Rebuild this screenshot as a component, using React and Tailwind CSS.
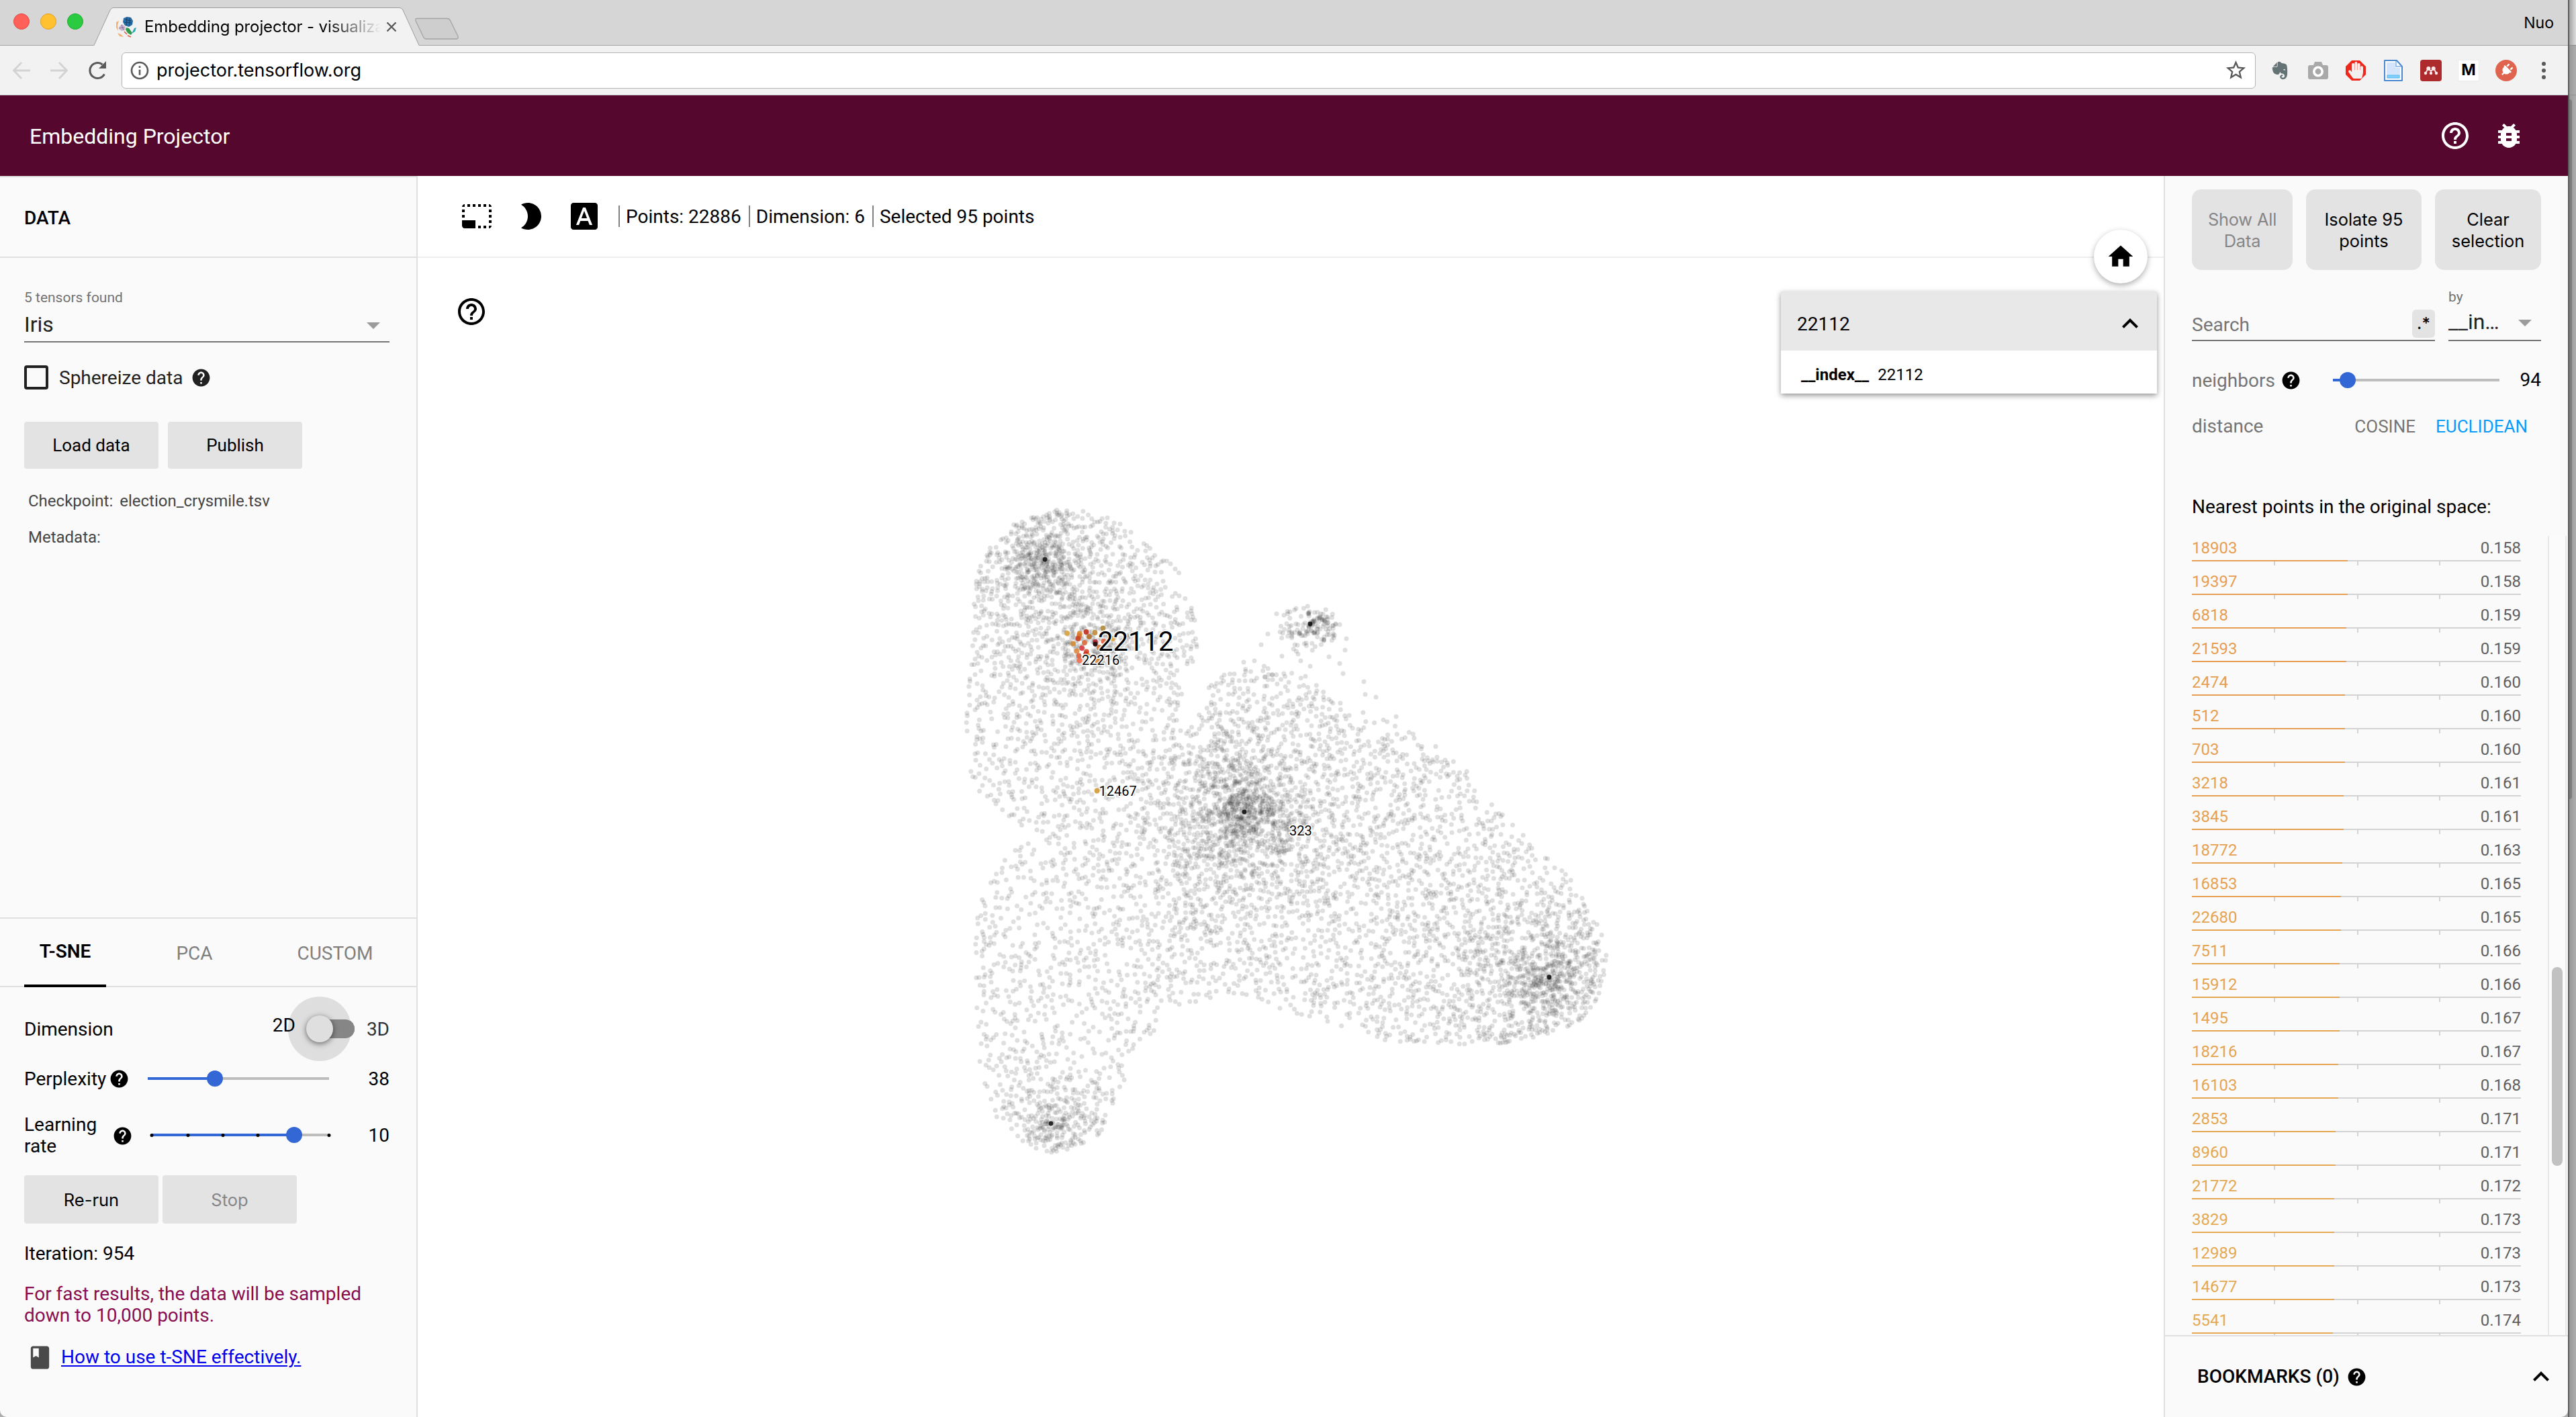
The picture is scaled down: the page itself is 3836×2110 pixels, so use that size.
import React from "react";
import {
  MdHelp, MdHelpOutline, MdBugReport, MdPhotoSizeSelectSmall, MdBrightness2, MdFontDownload,
  MdHome, MdKeyboardArrowUp, MdBook, MdStarBorder, MdInfoOutline,
} from "react-icons/md";
import { FaEvernote, FaHandPaper, FaPlug } from "react-icons/fa";

/* ---------- scatter plot data ---------- */

const OUTLINE = [
  [1570, 758], [1625, 762], [1668, 778], [1700, 800], [1730, 825], [1758, 850], [1773, 890], [1781, 930], [1783, 975],
  [1781, 1000], [1766, 1035], [1752, 1056], [1775, 1054], [1800, 1024], [1815, 1008], [1845, 992], [1880, 988], [1930, 1000],
  [1990, 1036], [2040, 1066], [2100, 1083], [2150, 1112], [2190, 1152], [2220, 1195], [2257, 1233], [2300, 1272],
  [2328, 1295], [2352, 1325], [2370, 1360], [2387, 1392], [2396, 1430], [2393, 1465], [2375, 1497], [2355, 1520],
  [2325, 1536], [2290, 1546], [2230, 1555], [2150, 1557], [2110, 1556], [2060, 1548], [2015, 1536], [1985, 1524],
  [1950, 1514], [1915, 1506], [1885, 1494], [1855, 1482], [1820, 1480], [1790, 1492], [1755, 1500], [1730, 1508],
  [1722, 1530], [1712, 1545], [1692, 1565], [1683, 1592], [1668, 1620], [1657, 1650], [1648, 1672], [1635, 1692],
  [1612, 1706], [1580, 1716], [1555, 1716], [1530, 1706], [1510, 1690], [1490, 1672], [1476, 1650], [1466, 1620],
  [1460, 1590], [1456, 1555], [1453, 1510], [1450, 1450], [1452, 1400], [1456, 1360], [1466, 1325], [1482, 1300],
  [1498, 1275], [1524, 1258], [1520, 1236], [1498, 1214], [1480, 1196], [1458, 1178], [1446, 1155], [1440, 1120],
  [1438, 1060], [1441, 1000], [1443, 940], [1447, 890], [1457, 850], [1472, 818], [1496, 788], [1530, 768],
];

// [x, y, strength, radius]
const CLUSTERS = [
  [1556, 833, 0.075, 36], [1631, 960, 0.034, 38], [1853, 1209, 0.085, 46], [2307, 1455, 0.065, 42],
  [1565, 1673, 0.06, 28], [2230, 1420, 0.007, 150], [1600, 930, 0.0035, 130], [1840, 1240, 0.005, 150],
];

const STRAYS = [
  [1888, 944], [1895, 1005], [1933, 974], [1909, 977], [1868, 984], [1852, 986], [1937, 984], [1951, 992], [1979, 978],
  [1995, 988], [2000, 1003], [1944, 1007], [1878, 960], [1895, 1012], [2033, 1034], [2049, 1038], [1823, 1005],
  [2031, 1015], [2079, 1067], [2005, 951], [2003, 968], [1995, 930], [1989, 930], [1822, 1014], [1884, 1008],
  [1901, 914], [1912, 916], [1921, 911], [1930, 906], [1977, 922], [1967, 914], [1950, 911],
];

const SELECTED = [
  [1589, 943, "#d9a440"], [1607.5, 943.5, "#dd8a35"], [1617.5, 941, "#c02c1a"], [1630.5, 942, "#c08c34"],
  [1642.5, 935.5, "#b08a34"], [1607, 947, "#d9762f"], [1605.5, 951, "#cb4422"], [1622, 948, "#b3712c"],
  [1598, 958.5, "#d28b38"], [1615, 957, "#dd6c3c"], [1611, 965, "#dc3c40"], [1631, 956, "#b02430"],
  [1643.5, 955, "#de5f34"], [1603.5, 969.5, "#df8b3e"], [1618, 970.5, "#d84c2c"], [1617, 974, "#c83424"],
  [1606.5, 976.5, "#d8603c"], [1607.5, 983.5, "#ee6c4e"], [1637, 964, "#d87a38"], [1657, 951, "#dfa444"],
  [1621, 977, "#e09a40"], [1634, 984, "#e08a3c"], [1633.5, 1177.5, "#d39a35"],
];

function inside(x, y) {
  let hit = false;
  for (let i = 0, j = OUTLINE.length - 1; i < OUTLINE.length; j = i++) {
    const [xi, yi] = OUTLINE[i];
    const [xj, yj] = OUTLINE[j];
    if (yi > y !== yj > y && x < ((xj - xi) * (y - yi)) / (yj - yi) + xi) hit = !hit;
  }
  return hit;
}

function buildPoints() {
  let seed = 22112;
  const rnd = () => {
    seed = (seed + 0x6d2b79f5) | 0;
    let t = Math.imul(seed ^ (seed >>> 15), 1 | seed);
    t = (t + Math.imul(t ^ (t >>> 7), 61 | t)) ^ t;
    return ((t ^ (t >>> 14)) >>> 0) / 4294967296;
  };
  const pts = [];
  const cells = new Map();
  const size = 12;
  const dMax = 0.1;
  const darts = Math.round(970 * 970 * dMax * 1.12);
  for (let i = 0; i < darts; i++) {
    const x = 1432 + rnd() * 970;
    const y = 752 + rnd() * 970;
    const pick = rnd();
    let d = 0.0078;
    for (const [cx, cy, a, s] of CLUSTERS) d += a * Math.exp(-Math.hypot(x - cx, y - cy) / s);
    if (x > 1690 && x < 1800 && y > 990 && y < 1120) d *= 0.6;
    if (y > 1240 && x < 1720 && y < 1600) d *= 0.85;
    if (pick * dMax > d || !inside(x, y)) continue;
    const r = 0.33 / Math.sqrt(d);
    const gx = Math.floor(x / size);
    const gy = Math.floor(y / size);
    let clash = false;
    for (let a = -1; a <= 1 && !clash; a++)
      for (let b = -1; b <= 1 && !clash; b++)
        for (const q of cells.get((gx + a) * 1000 + gy + b) || [])
          if (Math.hypot(q[0] - x, q[1] - y) < r) { clash = true; break; }
    if (clash) continue;
    const k = gx * 1000 + gy;
    if (!cells.has(k)) cells.set(k, []);
    cells.get(k).push([x, y]);
    pts.push([x, y]);
  }
  for (let i = 0; i < 130; i++) {
    const a = rnd() * Math.PI * 2;
    const r = Math.pow(rnd(), 0.9) * 44;
    pts.push([1949 + Math.cos(a) * r, 932 + Math.sin(a) * r * 0.85 + (r > 25 ? 4 : 0)]);
  }
  return pts.concat(STRAYS);
}

const POINTS = buildPoints();
const CORES = [[1556, 833], [1631, 959], [1853, 1209], [1951, 929], [2307, 1455], [1565, 1673]];

function Scatter() {
  return (
    <svg className="absolute inset-0 h-full w-full" viewBox="622 384 2600 1726" preserveAspectRatio="xMinYMin slice">
      <g fill="#000" fillOpacity="0.125">
        {POINTS.map(([x, y], i) => <circle key={i} cx={x.toFixed(1)} cy={y.toFixed(1)} r="3.5" />)}
      </g>
      <g fill="#000" fillOpacity="0.8">
        {CORES.map(([x, y]) => <circle key={x} cx={x} cy={y} r="3.4" />)}
      </g>
      <g fillOpacity="0.9">
        {SELECTED.map(([x, y, c], i) => <circle key={i} cx={x} cy={y} r="3.9" fill={c} />)}
      </g>
      <circle cx="1631" cy="959" r="3.4" fill="#2a1014" />
      <g fontFamily="Roboto, sans-serif" fill="#000" stroke="#fff" strokeWidth="3" strokeLinejoin="round" paintOrder="stroke">
        <text x="1635" y="969" fontSize="40">22112</text>
        <text x="1611" y="990" fontSize="20">22216</text>
        <text x="1636.5" y="1185" fontSize="20">12467</text>
        <text x="1920" y="1244" fontSize="20">323</text>
      </g>
    </svg>
  );
}

/* ---------- browser chrome ---------- */

function Favicon() {
  return (
    <svg className="h-[32px] w-[32px]" viewBox="0 0 32 32">
      <path d="M12 3l5-2 6 1 3 5-1 6-5 3-6-2-3-5z" fill="#2a6ea6" />
      <path d="M14 5l9 2M13 9l11 1M17 2l-1 12M21 2v12" stroke="#15436e" strokeWidth="1" />
      <path d="M6 15l4-3 5 4-1 5-5 1-4-3z" fill="#c9b6cf" />
      <path d="M9 13l3 8M5 18l8-1" stroke="#8d6f99" strokeWidth="1" />
      <path d="M16 17l4 1 5 7-2 3-5-3-3-5z" fill="#2e9a4a" />
      <path d="M31 17l-2 6-5 3 4-8z" fill="#2aa7b5" />
      <path d="M1 9l4-2-2 7 1 8-3-5zM3 25l5 2 4 4-6-1z" fill="#f2b277" />
      <path d="M13 23l4 4M18 29l5 2" stroke="#d8604a" strokeWidth="1.6" />
    </svg>
  );
}

function TabStrip() {
  return (
    <div className="flex h-[68px] shrink-0 border-b border-[#a2a2a2] bg-[#d6d6d6]">
      <div className="flex w-[140px] items-center gap-4 pl-5 pb-1">
        <span className="h-6 w-6 rounded-full border border-[#e2463f] bg-[#ff6058]" />
        <span className="h-6 w-6 rounded-full border border-[#dfa023] bg-[#ffc130]" />
        <span className="h-6 w-6 rounded-full border border-[#1dac2c] bg-[#2aca41]" />
      </div>
      <div className="relative h-[68px] w-[484px]">
        <svg className="absolute inset-0" width="484" height="68" viewBox="0 0 484 68">
          <path d="M0 67.5L24 15q2-3.500 5-3.500H455q3 0 5 3.500L484 67.500" fill="#f2f2f2" stroke="#9c9c9c" />
          <path d="M0.500 67.500H483.500" stroke="#f2f2f2" strokeWidth="1" />
        </svg>
        <div className="relative flex h-full items-center pl-[32px] pt-[12px]">
          <Favicon />
          <div className="ml-[11px] w-[351px] overflow-hidden whitespace-nowrap font-[Inter] text-[24px] leading-[32px] tracking-[-0.1px] text-black [mask-image:linear-gradient(to_right,#000_270px,transparent_352px)]">
            Embedding projector - visualiza
          </div>
          <svg className="ml-[9px] h-[16px] w-[16px]" viewBox="0 0 16 16">
            <path d="M1.500 1.500l13 13M14.500 1.500l-13 13" stroke="#5a5a5a" strokeWidth="2.400" />
          </svg>
        </div>
      </div>
      <svg className="-ml-[8px] mt-[26px]" width="70" height="34" viewBox="0 0 70 34">
        <path d="M5 1.500H50q3 0 4.500 3L66 28q1 4-3 4H19q-3 0-4.500-3L3 5q-1-3.500 2-3.500z" fill="#cecece" stroke="#a4a4a4" strokeWidth="1.300" />
      </svg>
      <div className="ml-auto pr-[21px] pt-[17px] font-[Inter] text-[23px] leading-[34px] text-black">Nuo</div>
    </div>
  );
}

function Extensions() {
  return (
    <>
      <span className="flex w-[26px]"><FaEvernote className="h-[30px] w-[26px] text-[#647376]" /></span>
      <svg className="ml-[29px]" width="30" height="26" viewBox="0 0 30 26">
        <path d="M0 8q0-3 3-3h5l2-5h10l2 5h5q3 0 3 3v15q0 3-3 3H3q-3 0-3-3z" fill="#a9a9a9" />
        <circle cx="15" cy="14.500" r="6.200" fill="none" stroke="#fff" strokeWidth="3.600" />
      </svg>
      <span className="relative ml-[26px] flex h-[30px] w-[30px] items-center justify-center">
        <svg className="absolute inset-0" width="30" height="30" viewBox="0 0 30 30">
          <path d="M9 0h12l9 9v12l-9 9H9l-9-9V9z" fill="#f0281b" />
        </svg>
        <FaHandPaper className="relative h-[25px] w-[22px] text-[#f4efef]" />
      </span>
      <svg className="ml-[27px]" width="28" height="32" viewBox="0 0 28 32">
        <path d="M1 1h18l8 9v21H1z" fill="#fff" stroke="#4a88d0" strokeWidth="2" strokeLinejoin="round" />
        <path d="M4 4h13v8h7v16H4z" fill="#d4e5fb" />
        <path d="M18 2v8h8" fill="none" stroke="#7fb0e8" strokeWidth="1.500" />
        <path d="M5 23h18v4H5z" fill="#7fd0fb" stroke="#5cbcf3" />
      </svg>
      <svg className="ml-[26px]" width="32" height="32" viewBox="0 0 32 32">
        <rect width="32" height="32" rx="4" fill="#ad2b2d" />
        <g fill="#fbeaea">
          <circle cx="12.300" cy="13" r="3" /><circle cx="19.700" cy="13" r="3" />
          <circle cx="8" cy="20" r="2.200" /><circle cx="16" cy="20" r="2.200" /><circle cx="24" cy="20" r="2.200" />
        </g>
        <path d="M8 20l3.800-7 4.200 4 4.200-4 3.800 7" fill="none" stroke="#fbeaea" strokeWidth="1.800" />
      </svg>
      <span className="ml-[24px] flex h-[32px] w-[32px] items-center justify-center border border-[#ececec] bg-white font-[Inter] text-[23px] font-bold leading-none text-black">M</span>
      <span className="ml-[24px] flex h-[32px] w-[32px] items-center justify-center rounded-full bg-[#e0634f]">
        <FaPlug className="h-[19px] w-[19px] rotate-45 text-white" />
      </span>
      <span className="ml-[37px] flex flex-col gap-[4px]">
        <i className="h-[6px] w-[6px] rounded-full bg-[#5a5a5a]" />
        <i className="h-[6px] w-[6px] rounded-full bg-[#5a5a5a]" />
        <i className="h-[6px] w-[6px] rounded-full bg-[#5a5a5a]" />
      </span>
    </>
  );
}

function Toolbar() {
  return (
    <div className="flex h-[74px] shrink-0 items-center border-b border-[#c4c4c4] bg-[#f2f2f2] pl-[13px] text-[#5a5a5a]">
      <svg width="38" height="30" viewBox="0 0 38 30" fill="none" stroke="#d3d3d3" strokeWidth="2.800">
        <path d="M32 15H8M19 3L7.500 15L19 27" />
      </svg>
      <svg className="ml-[18px]" width="38" height="30" viewBox="0 0 38 30" fill="none" stroke="#d3d3d3" strokeWidth="2.800">
        <path d="M6 15h24M19 3l11.500 12L19 27" />
      </svg>
      <svg className="ml-[20px]" width="36" height="32" viewBox="0 0 36 32">
        <path d="M28.500 21.500A11.500 11.500 0 1 1 25.500 7" fill="none" stroke="#5a5a5a" strokeWidth="3" />
        <path d="M31 2v11H20z" fill="#5a5a5a" />
      </svg>
      <div className="ml-[18px] flex h-[54px] w-[3178px] items-center rounded-[6px] border border-[#b4b4b4] bg-white pl-[10px] pr-[11px]">
        <MdInfoOutline className="h-[32px] w-[32px]" />
        <span className="ml-[9px] pt-px font-[Inter] text-[27px] leading-[34px] text-black">projector.tensorflow.org</span>
        <MdStarBorder className="ml-auto h-[35px] w-[35px]" />
      </div>
      <div className="ml-[23px] flex items-center">
        <Extensions />
      </div>
    </div>
  );
}

/* ---------- shared pieces ---------- */

function Slider({ className, fill, knob, ticks }) {
  return (
    <div className={"relative flex h-6 items-center " + className}>
      <div className="h-1 w-full bg-[#bdbdbd]">
        <div className="h-1 bg-[#3367d6]" style={{ width: fill }} />
      </div>
      {ticks && ticks.map((t) => <i key={t} className="absolute h-[5px] w-[5px] -translate-x-1/2 rounded-full bg-black" style={{ left: t }} />)}
      <i className="absolute h-6 w-6 -translate-x-1/2 rounded-full bg-[#3367d6]" style={{ left: knob }} />
    </div>
  );
}

const Caret = () => <i className="mt-1 block border-x-[10px] border-t-[10px] border-x-transparent border-t-[#9b9b9b]" />;

/* ---------- left panel ---------- */

function DataPanel() {
  return (
    <>
      <div className="flex h-[122px] items-center border-y-2 border-[#e0e0e0] pl-9 pt-[3px] font-medium">DATA</div>
      <div className="px-9">
        <div className="mt-[47px] h-6 text-[21px] leading-6 text-[#737373]">5 tensors found</div>
        <div className="mt-[3px] flex h-[52px] w-[544px] items-center justify-between border-b-2 border-[#757575] pr-[14px] text-[32px] text-[#212121]">
          Iris
          <Caret />
        </div>
        <div className="mt-[34px] flex h-9 items-center text-[#212121]">
          <span className="h-9 w-9 rounded-[4px] border-4 border-[#212121]" />
          <span className="ml-4 pt-px">Sphereize data</span>
          <MdHelp className="ml-[12px] h-[31px] w-[31px]" />
        </div>
        <div className="mt-12 flex gap-[14px] text-[26px]">
          <div className="flex h-[70px] w-[200px] items-center justify-center rounded-[4px] bg-[#e3e3e3]">Load data</div>
          <div className="flex h-[70px] w-[200px] items-center justify-center rounded-[4px] bg-[#e3e3e3]">Publish</div>
        </div>
        <div className="mt-[33px] flex h-[30px] items-center gap-[10px] pl-[6px] text-[24px] text-[#454545]">
          <span>Checkpoint:</span>
          <span>election_crysmile.tsv</span>
        </div>
        <div className="mt-[24px] flex h-[30px] items-center pl-[6px] text-[24px] text-[#454545]">Metadata:</div>
      </div>
    </>
  );
}

function TsnePanel() {
  return (
    <>
      <div className="flex h-[104px] shrink-0 border-y-2 border-[#e0e0e0] pl-9">
        <div className="-mb-[2px] flex w-[122px] items-center justify-center border-b-4 border-black font-[600]">T-SNE</div>
        <div className="flex w-[263px] items-center justify-center pt-[3px] text-[#808080]">PCA</div>
        <div className="flex w-[156px] items-center justify-center pt-[3px] text-[#808080]">CUSTOM</div>
      </div>
      <div className="h-[640px] shrink-0 pl-9 pr-10">
        <div className="mt-10 flex h-11 items-center">
          <span className="pt-[2px]">Dimension</span>
          <span className="relative z-10 ml-auto -translate-y-[5px]">2D</span>
          <span className="relative ml-4 flex h-7 w-[72px] rounded-full bg-[#868686]">
            <i className="absolute -left-[27px] -top-[34px] h-[96px] w-[94px] rounded-full bg-[#dedede]" />
            <i className="absolute left-5 right-0 h-7 rounded-r-full bg-[#868686]" />
            <i className="absolute -top-[6px] h-10 w-10 rounded-full bg-[#dfdfdf] shadow-[0_2px_8px_rgba(0,0,0,0.55)]" />
          </span>
          <span className="ml-[18px] pt-[2px] text-[#333]">3D</span>
        </div>
        <div className="mt-8 flex h-10 items-center">
          <span className="pt-px">Perplexity</span>
          <MdHelp className="ml-[4px] h-[31px] w-[31px]" />
          <Slider className="ml-[27px] w-[270px]" fill={100} knob={100} />
          <span className="ml-auto pt-px">38</span>
        </div>
        <div className="mt-[33px] flex h-16 items-center leading-8">
          <span className="w-[131px]">Learning rate</span>
          <MdHelp className="h-[31px] w-[31px]" />
          <Slider className="ml-[28px] w-[264px] -translate-y-px" fill={212} knob={212} ticks={[0, 54, 106, 158, 264]} />
          <span className="ml-auto">10</span>
        </div>
        <div className="mt-[27px] flex gap-[6px] font-[Inter] text-[25.5px]">
          <div className="flex h-[72px] w-[200px] items-center justify-center rounded-[4px] bg-[#e3e3e3] pt-px">Re-run</div>
          <div className="flex h-[72px] w-[200px] items-center justify-center rounded-[4px] bg-[#e3e3e3] pt-px text-[#868686]">Stop</div>
        </div>
        <div className="mt-[29px] leading-8">Iteration: 954</div>
        <div className="mt-[28px] leading-8 text-[#880e4f]">
          For fast results, the data will be sampled<br />down to 10,000 points.
        </div>
        <div className="mt-[25px] flex h-10 items-center pl-[3px]">
          <MdBook className="mt-[3px] h-[41px] w-[41px] text-[#4a4a4a]" />
          <span className="ml-[11px] pt-px text-[#0000ee] underline decoration-2 underline-offset-[3px]">How to use t-SNE effectively.</span>
        </div>
      </div>
    </>
  );
}

/* ---------- right panel ---------- */

const NEIGHBORS = [
  [18903, "0.158", 232, "#e79d52"], [19397, "0.158", 232, "#e79d52"], [6818, "0.159", 230, "#e79d52"], [21593, "0.159", 230, "#e79d52"],
  [2474, "0.160", 228, "#e69e52"], [512, "0.160", 228, "#e69f52"], [703, "0.160", 228, "#e69f52"], [3218, "0.161", 226, "#e6a052"],
  [3845, "0.161", 226, "#e6a052"], [18772, "0.163", 224, "#e6a152"], [16853, "0.165", 222, "#e6a252"], [22680, "0.165", 222, "#e6a352"],
  [7511, "0.166", 220, "#e5a352"], [15912, "0.166", 220, "#e5a452"], [1495, "0.167", 220, "#e5a452"], [18216, "0.167", 218, "#e5a452"],
  [16103, "0.168", 218, "#e5a552"], [2853, "0.171", 214, "#e5a752"], [8960, "0.171", 214, "#e5a752"], [21772, "0.172", 212, "#e4a852"],
  [3829, "0.173", 212, "#e4a952"], [12989, "0.173", 212, "#e4a952"], [14677, "0.173", 212, "#e4a952"], [5541, "0.174", 210, "#e4a952"],
];

function NeighborRow({ id, value, width, color }) {
  return (
    <div className="h-[50px] w-[490px] shrink-0">
      <div className="flex h-9 items-center justify-between text-[24px]">
        <span className="font-[450]" style={{ color }}>{id}</span>
        <span className="text-[#606060]">{value}</span>
      </div>
      <div className="h-[2px] bg-[#d3d3d3]">
        <div className="h-[2px]" style={{ width, background: color }} />
      </div>
      <div className="flex h-[6px] gap-[122px] pl-[122px]">
        <i className="w-[2px] bg-[#d3d3d3]" />
        <i className="w-[2px] bg-[#d3d3d3]" />
        <i className="-ml-[2px] w-[2px] bg-[#d3d3d3]" />
      </div>
    </div>
  );
}

function Inspector() {
  return (
    <div className="flex w-[602px] shrink-0 flex-col border-l-2 border-[#e0e0e0] bg-[#fafafa]">
      <div className="pl-10 pr-10">
        <div className="mt-5 flex h-[120px] gap-5 text-center font-[Inter] text-[25.4px] leading-8">
          <div className="flex w-[150px] items-center justify-center rounded-[14px] bg-[#e3e3e3] pt-[2px] tracking-[-0.2px] text-[#868686]">Show All<br />Data</div>
          <div className="flex w-[172px] items-center justify-center rounded-[14px] bg-[#e3e3e3] pt-[2px]">Isolate 95<br />points</div>
          <div className="flex w-[158px] items-center justify-center rounded-[14px] bg-[#e3e3e3] pt-[2px]">Clear<br />selection</div>
        </div>
        <div className="mt-[30px] flex h-[76px] items-end gap-5">
          <div className="flex h-[50px] w-[362px] items-center justify-between border-b-2 border-[#757575] text-[#757575]">
            <span className="pt-[3px]">Search</span>
            <span className="mb-[2px] mt-[2px] flex h-[42px] w-[34px] items-center justify-center rounded-[6px] bg-[#e3e3e3] font-[Inter] text-[24px] font-medium text-black">.*</span>
          </div>
          <div className="h-[76px] w-[138px] border-b-2 border-[#757575]">
            <div className="h-[20px] text-[21px] leading-[20px] text-[#737373]">by</div>
            <div className="flex h-[54px] items-center justify-between pb-[2px] pr-[14px] pt-[2px] text-[32px] text-[#212121]">
              __in… <Caret />
            </div>
          </div>
        </div>
        <div className="mt-[38px] flex h-10 items-center">
          <span className="pt-px text-[#757575]">neighbors</span>
          <MdHelp className="ml-[8px] h-[31px] w-[31px]" />
          <Slider className="ml-[47px] w-[248px]" fill={22} knob={22} />
          <span className="ml-auto">94</span>
        </div>
        <div className="mt-7 flex h-10 items-center pt-[2px] text-[#757575]">
          distance
          <span className="ml-auto text-[26px]">COSINE</span>
          <span className="ml-[30px] mr-[20px] text-[26px] text-[#0a9bfb]">EUCLIDEAN</span>
        </div>
        <div className="mt-[83px] h-9 whitespace-nowrap leading-9">Nearest points in the original space:</div>
      </div>
      <div className="mt-[25px] flex h-[1190px] shrink-0">
        <div className="flex h-[1190px] w-[570px] flex-col overflow-hidden pl-10">
          {NEIGHBORS.map(([id, value, width, color]) => <NeighborRow key={id} id={id} value={value} width={width} color={color} />)}
        </div>
        <div className="flex w-[28px] justify-center border-x-2 border-[#e8e8e8] bg-[#fbfbfb]">
          <i className="mt-[642px] h-[296px] w-4 rounded-full bg-[#c1c1c1]" />
        </div>
      </div>
      <div className="flex flex-1 items-center border-t-2 border-[#e0e0e0] pl-[48px] pr-[16px] font-medium">
        BOOKMARKS (0)
        <MdHelp className="ml-[10px] h-[31px] w-[31px]" />
        <MdKeyboardArrowUp className="ml-auto h-12 w-12" />
      </div>
    </div>
  );
}

/* ---------- middle ---------- */

function Projector() {
  return (
    <div className="flex flex-1 flex-col bg-white">
      <div className="flex h-[122px] shrink-0 items-center border-b-2 border-[#eee] pl-16">
        <MdPhotoSizeSelectSmall className="h-12 w-12" />
        <MdBrightness2 className="ml-8 h-12 w-12" />
        <MdFontDownload className="ml-8 h-12 w-12" />
        <span className="ml-[27px] h-8 border-l-2 border-[#808080] pl-[9px] leading-[34px]">Points: 22886</span>
        <span className="ml-[11px] h-8 border-l-2 border-[#808080] pl-[9px] leading-[34px]">Dimension: 6</span>
        <span className="ml-[11px] h-8 border-l-2 border-[#808080] pl-[9px] leading-[34px]">Selected 95 points</span>
      </div>
      <div className="relative flex-1">
        <Scatter />
        <MdHelpOutline className="absolute left-[56px] top-[56px] h-12 w-12" />
        <div className="absolute right-[24px] -top-[42px] flex h-20 w-20 items-center justify-center rounded-full bg-white shadow-[0_3px_8px_rgba(0,0,0,0.32)]">
          <MdHome className="h-11 w-11" />
        </div>
        <div className="absolute right-[10px] top-[50px] w-[560px] bg-white shadow-[0_3px_8px_rgba(0,0,0,0.42)]">
          <div className="flex h-[88px] items-center justify-between bg-[#e8e8e8] pl-6 pr-4 pt-[7px]">
            <span className="pt-[2px]">22112</span>
            <MdKeyboardArrowUp className="h-12 w-12" />
          </div>
          <div className="flex h-16 items-center gap-[13px] pl-[30px] pt-[7px] text-[24px]">
            <b>__index__</b>
            <span>22112</span>
          </div>
        </div>
      </div>
    </div>
  );
}

export default function App() {
  return (
    <div className="flex h-[2110px] w-[3836px] overflow-hidden bg-[#ababab] font-[Roboto,sans-serif] text-[28px] leading-9 text-black">
      <div className="flex w-[3824px] shrink-0 flex-col overflow-hidden rounded-b-[10px]">
        <TabStrip />
        <Toolbar />
        <div className="flex h-[120px] shrink-0 items-center bg-[#55072e] pl-11 pr-[64px] text-white">
          <span className="pt-[2px] text-[32px]">Embedding Projector</span>
          <MdHelpOutline className="ml-auto h-12 w-12" />
          <MdBugReport className="ml-8 h-12 w-12" />
        </div>
        <div className="flex min-h-0 flex-1">
          <div className="flex w-[622px] shrink-0 flex-col border-r-2 border-[#e0e0e0] bg-[#fafafa]">
            <DataPanel />
            <div className="flex-1" />
            <TsnePanel />
          </div>
          <Projector />
          <Inspector />
        </div>
      </div>
      <div className="flex w-3 flex-col border-l-2 border-[#5c5c5c] bg-gradient-to-r from-[#999] to-[#adadad]">
        <i className="h-[67px] bg-gradient-to-r from-[#a6a6a6] to-[#dedede]" />
        <i className="h-px bg-[#8a8a8a]" />
        <i className="mt-[73px] h-px bg-[#8f8f8f]" />
        <i className="mt-[6px] h-[1042px] w-1 rounded-r-full bg-[#7d7d7d]" />
      </div>
    </div>
  );
}
